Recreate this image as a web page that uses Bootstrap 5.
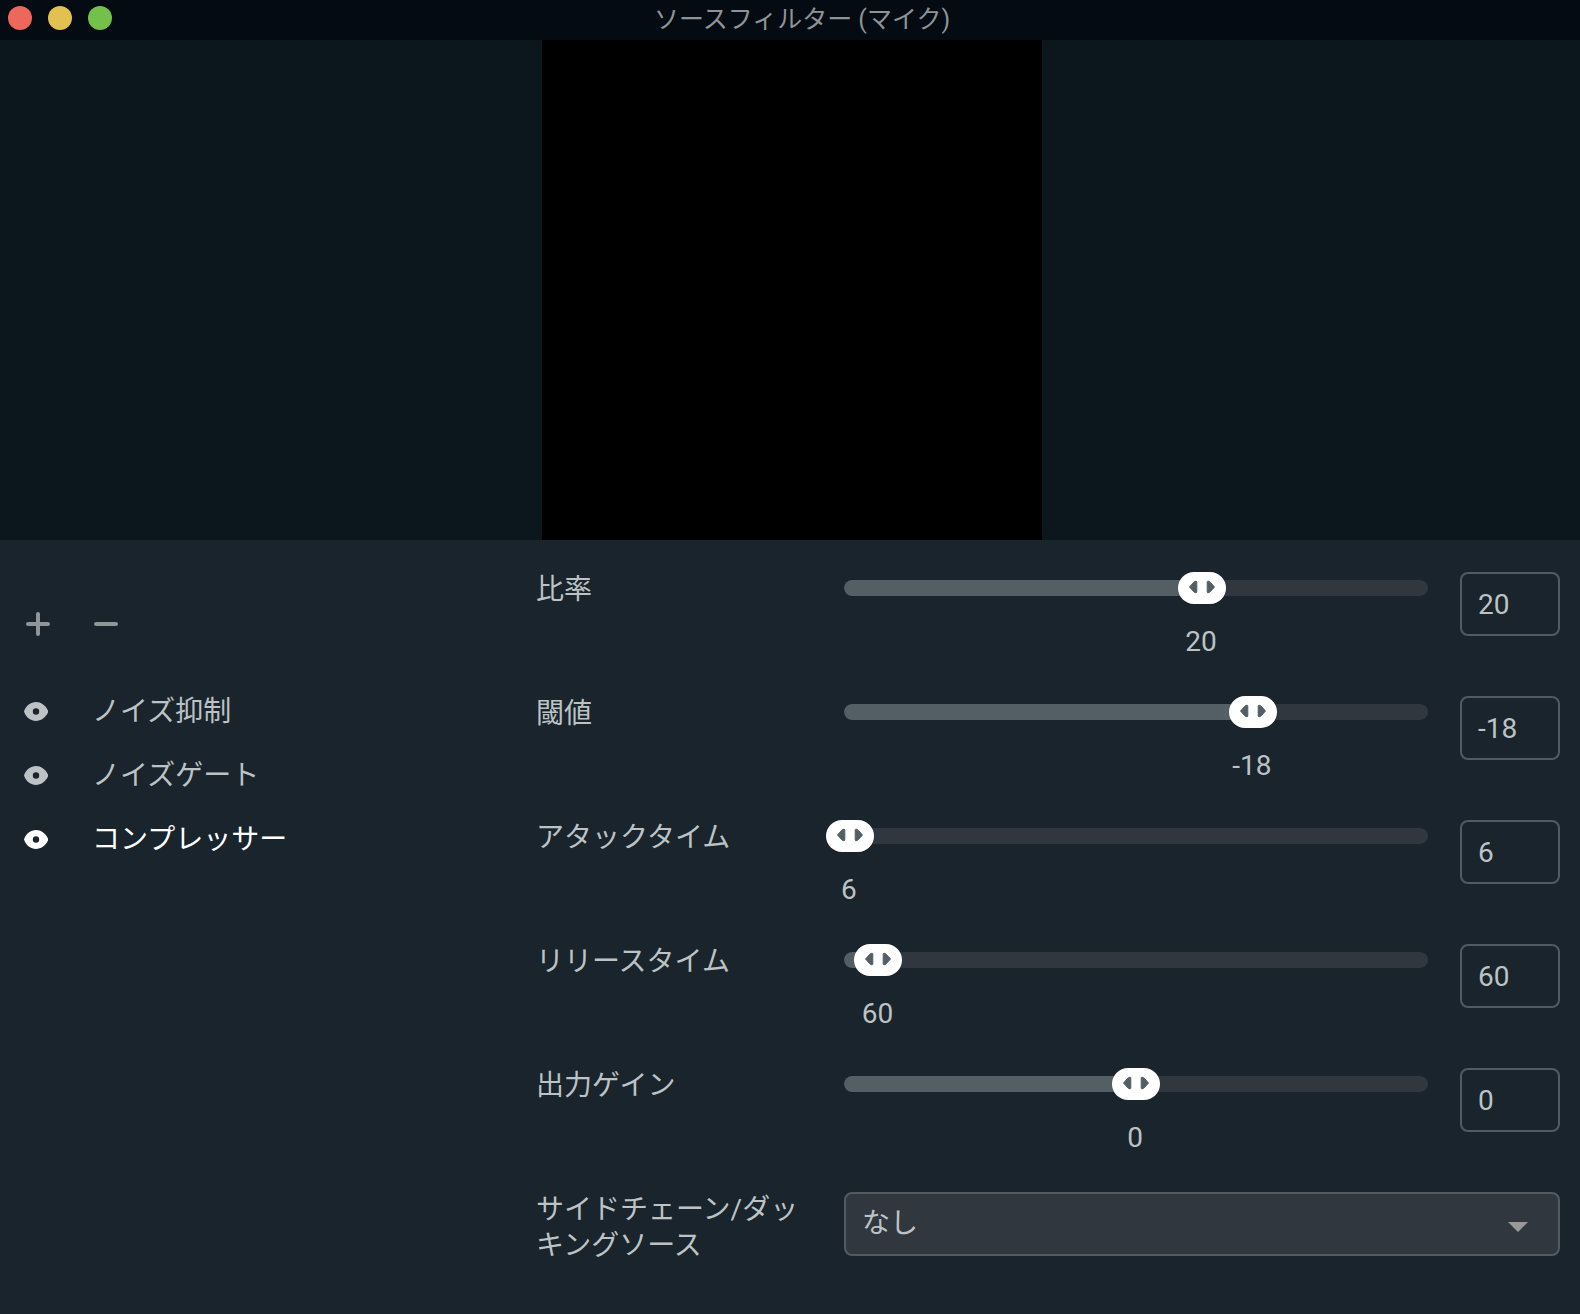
<!DOCTYPE html>
<html lang="ja">
<head>
<meta charset="utf-8">
<meta name="viewport" content="width=device-width, initial-scale=1">
<title>ソースフィルター (マイク)</title>
<link rel="stylesheet" href="https://cdn.jsdelivr.net/npm/bootstrap@5.3.0/dist/css/bootstrap.min.css">
<style>
  :root {
    --panel: #1a242c;
    --text: #bdc2c4;
    --line: #505b63;
    --groove: #30373f;
  }
  body {
    font-family: Roboto, "Noto Sans CJK JP", sans-serif;
    font-size: 28px;
    line-height: 36px;
    color: var(--text);
    background: var(--panel);
  }
  .titlebar { height: 40px; background: #040b12; padding: 0 88px 0 8px; }
  .titlebar h1 { font-size: 25px; line-height: 36px; color: #8e9396; }
  .light { width: 24px; height: 24px; border-radius: 50%; border: 0; padding: 0; }
  .light-close { background: #ed675b; }
  .light-min { background: #e2c150; }
  .light-max { background: #74c04a; }
  .preview { background: #0c171d; padding-left: 4px; }
  .preview-canvas { width: 500px; height: 500px; background: #000; }
  .sidebar { flex: 0 0 536px; padding: 72px 24px 0; }
  .tools { gap: 40px; }
  .tool-btn { border: 0; background: none; padding: 0; width: 28px; height: 24px; color: #8f9697; }
  .filter-list { padding-top: 44px; }
  .filter-link { height: 64px; gap: 44px; color: var(--text); text-decoration: none; }
  .filter-link.active { color: #fff; }
  .form-pane { padding: 32px 20px 0 0; }
  .setting { min-height: 124px; gap: 32px; }
  .setting-label { flex: 0 0 276px; }
  .slider-box { height: 32px; padding: 8px 0; position: relative; }
  .groove { height: 16px; border-radius: 8px; background: var(--groove); }
  .groove .progress-bar { background: #535e65; border-radius: 8px 0 0 8px; }
  .slider-box .form-range { position: absolute; top: 0; left: -24px; width: calc(100% + 48px); height: 32px; }
  .form-range::-webkit-slider-runnable-track { background: transparent; height: 32px; }
  .form-range::-webkit-slider-thumb {
    width: 48px; height: 32px; margin-top: 0; border-radius: 16px;
    background: #fff url("data:image/svg+xml,%3Csvg xmlns='http://www.w3.org/2000/svg' viewBox='0 0 48 32'%3E%3Cpath d='M11.500 15l4-4.500q1.300-1.300 2.500-1.300q.8 0 .8.9v9.800q0 .9-.8.9q-1.200 0-2.500-1.300l-4-4.500zM36.500 15l-4-4.500q-1.300-1.300-2.500-1.300q-.8 0-.8.9v9.800q0 .9.8.9q1.200 0 2.500-1.300l4-4.500z' fill='%23535e65' stroke='%23535e65' stroke-width='1'/%3E%3C/svg%3E") center / 48px 32px no-repeat;
  }
  .form-range::-moz-range-thumb { width: 48px; height: 32px; border-radius: 16px; background: #fff; }
  .slider-value { width: 94px; margin-top: 20px; }
  .number-box, .source-select {
    height: 64px; border: 2px solid var(--line); border-radius: 8px;
    color: var(--text); font-size: 28px; line-height: 36px; padding: 0 16px;
  }
  .number-box, .number-box:focus { flex: 0 0 100px; width: 100px; background: transparent; color: var(--text); }
  .source-select {
    background: var(--groove) url("data:image/svg+xml,%3Csvg xmlns='http://www.w3.org/2000/svg' viewBox='0 0 20 10'%3E%3Cpath d='M0 0h20L10 10z' fill='%23999'/%3E%3C/svg%3E") right 30px top 28px / 20px 10px no-repeat;
  }
</style>
<script src="https://cdn.jsdelivr.net/npm/bootstrap@5.3.0/dist/js/bootstrap.bundle.min.js"></script>
</head>
<body class="d-flex flex-column min-vh-100">

<header class="titlebar d-flex align-items-center">
  <div class="d-flex gap-3 pb-1">
    <button type="button" class="light light-close" aria-label="閉じる"></button>
    <button type="button" class="light light-min" aria-label="最小化"></button>
    <button type="button" class="light light-max" aria-label="最大化"></button>
  </div>
  <h1 class="flex-grow-1 text-center fw-normal m-0">ソースフィルター (マイク)</h1>
</header>

<section class="preview d-flex justify-content-center">
  <div class="preview-canvas"></div>
</section>

<main class="d-flex flex-grow-1">
  <nav class="sidebar">
    <div class="tools d-flex">
      <button type="button" class="tool-btn d-flex justify-content-center" aria-label="追加">
        <svg width="24" height="24" viewBox="0 0 24 24" fill="none" stroke="currentColor" stroke-width="4" stroke-linecap="round"><path d="M2 12h20M12 2v20"/></svg>
      </button>
      <button type="button" class="tool-btn d-flex justify-content-center" aria-label="削除">
        <svg width="24" height="24" viewBox="0 0 24 24" fill="none" stroke="currentColor" stroke-width="4" stroke-linecap="round"><path d="M2 12h20"/></svg>
      </button>
    </div>
    <svg class="d-none"><symbol id="eye" viewBox="0 0 24 20"><path fill="currentColor" fill-rule="evenodd" d="M0 9.500C2 3.500 6.800 0 12 0S22 3.500 24.500 9.500C22 15.500 17.200 19 12 19S2 15.500 0 9.500zM12 6.300a3.200 3.200 0 1 0 0 6.400a3.200 3.200 0 0 0 0-6.400z"/></symbol></svg>
    <ul class="filter-list list-unstyled m-0">
      <li><a href="#" class="filter-link d-flex align-items-center"><svg width="24" height="20"><use href="#eye"/></svg>ノイズ抑制</a></li>
      <li><a href="#" class="filter-link d-flex align-items-center"><svg width="24" height="20"><use href="#eye"/></svg>ノイズゲート</a></li>
      <li><a href="#" class="filter-link active d-flex align-items-center"><svg width="24" height="20"><use href="#eye"/></svg>コンプレッサー</a></li>
    </ul>
  </nav>

  <form class="form-pane flex-grow-1">
    <div class="setting d-flex align-items-start">
      <label class="setting-label" for="ratio">比率</label>
      <div class="flex-grow-1">
        <div class="slider-box">
          <div class="groove progress"><div class="progress-bar" style="width: 61.3%"></div></div>
          <input class="form-range" type="range" id="ratio" min="1" max="32" value="20">
        </div>
        <output class="slider-value d-block text-center" for="ratio" style="margin-left: calc(61.3% - 48px)">20</output>
      </div>
      <input class="number-box form-control" type="text" value="20" aria-label="比率の値">
    </div>
    <div class="setting d-flex align-items-start">
      <label class="setting-label" for="threshold">閾値</label>
      <div class="flex-grow-1">
        <div class="slider-box">
          <div class="groove progress"><div class="progress-bar" style="width: 70%"></div></div>
          <input class="form-range" type="range" id="threshold" min="-60" max="0" value="-18">
        </div>
        <output class="slider-value d-block text-center" for="threshold" style="margin-left: calc(70% - 48px)">-18</output>
      </div>
      <input class="number-box form-control" type="text" value="-18" aria-label="閾値の値">
    </div>
    <div class="setting d-flex align-items-start">
      <label class="setting-label" for="attack">アタックタイム</label>
      <div class="flex-grow-1">
        <div class="slider-box">
          <div class="groove progress"><div class="progress-bar" style="width: 1%"></div></div>
          <input class="form-range" type="range" id="attack" min="1" max="500" value="6">
        </div>
        <output class="slider-value d-block text-center" for="attack" style="margin-left: calc(1% - 48px)">6</output>
      </div>
      <input class="number-box form-control" type="text" value="6" aria-label="アタックタイムの値">
    </div>
    <div class="setting d-flex align-items-start">
      <label class="setting-label" for="release">リリースタイム</label>
      <div class="flex-grow-1">
        <div class="slider-box">
          <div class="groove progress"><div class="progress-bar" style="width: 5.9%"></div></div>
          <input class="form-range" type="range" id="release" min="1" max="1000" value="60">
        </div>
        <output class="slider-value d-block text-center" for="release" style="margin-left: calc(5.9% - 48px)">60</output>
      </div>
      <input class="number-box form-control" type="text" value="60" aria-label="リリースタイムの値">
    </div>
    <div class="setting d-flex align-items-start">
      <label class="setting-label" for="gain">出力ゲイン</label>
      <div class="flex-grow-1">
        <div class="slider-box">
          <div class="groove progress"><div class="progress-bar" style="width: 50%"></div></div>
          <input class="form-range" type="range" id="gain" min="-32" max="32" value="0">
        </div>
        <output class="slider-value d-block text-center" for="gain" style="margin-left: calc(50% - 48px)">0</output>
      </div>
      <input class="number-box form-control" type="text" value="0" aria-label="出力ゲインの値">
    </div>
    <div class="setting d-flex align-items-start">
      <label class="setting-label" for="source">サイドチェーン/ダッキングソース</label>
      <select class="source-select form-select flex-grow-1 w-auto" id="source"><option>なし</option></select>
    </div>
  </form>
</main>
</body>
</html>
